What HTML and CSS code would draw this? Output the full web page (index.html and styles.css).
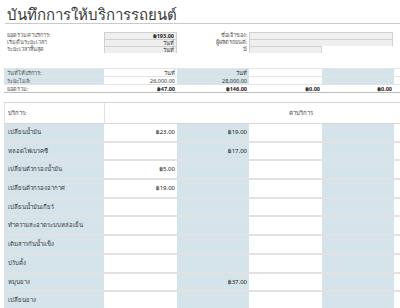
FILE: index.html
```html
<!DOCTYPE html>
<html lang="th">
<head>
<meta charset="utf-8">
<link rel="stylesheet" href="styles.css">
</head>
<body>
<div class="page">
  <h1 class="title">บันทึกการให้บริการรถยนต์</h1>

  <div class="grid summary">
    <div class="lbl">ยอดรวมค่าบริการ:</div>
    <div class="box num bold">฿193.00</div>
    <div class="rlbl">ชื่อเจ้าของ:</div>
    <div class="box wide"></div>
    <div></div>

    <div class="lbl">เริ่มต้นระยะเวลา</div>
    <div class="box num">วันที่</div>
    <div class="rlbl">ผู้ผลิตรถยนต์:</div>
    <div class="box wide"></div>
    <div></div>

    <div class="lbl">ระยะเวลาสิ้นสุด</div>
    <div class="box num">วันที่</div>
    <div class="rlbl">ปี:</div>
    <div class="box"></div>
    <div></div>
    <div></div>
  </div>

  <div class="grid visits">
    <div class="c blue lbl">วันที่ให้บริการ:</div>
    <div class="c num">วันที่</div>
    <div class="c blue num">วันที่</div>
    <div class="c"></div>
    <div class="c blue"></div>
    <div class="c"></div>

    <div class="c blue lbl">ระยะไมล์:</div>
    <div class="c num">26,000.00</div>
    <div class="c blue num">28,000.00</div>
    <div class="c"></div>
    <div class="c blue"></div>
    <div class="c"></div>

    <div class="c tot lbl">ยอดรวม:</div>
    <div class="c tot num bold">฿47.00</div>
    <div class="c tot num bold">฿146.00</div>
    <div class="c tot num bold">฿0.00</div>
    <div class="c tot num bold">฿0.00</div>
    <div class="c tot"></div>
  </div>

  <div class="grid services">
    <div class="h lbl">บริการ:</div>
    <div class="h head">ค่าบริการ</div>

    <div class="s blue lbl">เปลี่ยนน้ำมัน</div>
    <div class="s num">฿23.00</div>
    <div class="s blue num">฿19.00</div>
    <div class="s"></div><div class="s blue"></div><div class="s"></div>

    <div class="s blue lbl">หลอดไฟเบรคซี</div>
    <div class="s num"></div>
    <div class="s blue num">฿17.00</div>
    <div class="s"></div><div class="s blue"></div><div class="s"></div>

    <div class="s blue lbl">เปลี่ยนตัวกรองน้ำมัน</div>
    <div class="s num">฿5.00</div>
    <div class="s blue"></div>
    <div class="s"></div><div class="s blue"></div><div class="s"></div>

    <div class="s blue lbl">เปลี่ยนตัวกรองอากาศ</div>
    <div class="s num">฿19.00</div>
    <div class="s blue"></div>
    <div class="s"></div><div class="s blue"></div><div class="s"></div>

    <div class="s blue lbl">เปลี่ยนน้ำมันเกียร์</div>
    <div class="s"></div>
    <div class="s blue"></div>
    <div class="s"></div><div class="s blue"></div><div class="s"></div>

    <div class="s blue lbl">ทำความสะอาดระบบหล่อเย็น</div>
    <div class="s"></div>
    <div class="s blue"></div>
    <div class="s"></div><div class="s blue"></div><div class="s"></div>

    <div class="s blue lbl">เติมสารกันน้ำแข็ง</div>
    <div class="s"></div>
    <div class="s blue"></div>
    <div class="s"></div><div class="s blue"></div><div class="s"></div>

    <div class="s blue lbl">ปรับตั้ง</div>
    <div class="s"></div>
    <div class="s blue"></div>
    <div class="s"></div><div class="s blue"></div><div class="s"></div>

    <div class="s blue lbl">หมุนยาง</div>
    <div class="s"></div>
    <div class="s blue num">฿37.00</div>
    <div class="s"></div><div class="s blue"></div><div class="s"></div>

    <div class="s blue lbl">เปลี่ยนยาง</div>
    <div class="s"></div>
    <div class="s blue"></div>
    <div class="s"></div><div class="s blue"></div><div class="s"></div>
  </div>
</div>
</body>
</html>
```

FILE: styles.css
```css
html, body {
  margin: 0;
  padding: 0;
  background: #fff;
}
body {
  font-family: "Noto Sans", "DejaVu Sans", "Liberation Sans", sans-serif;
  color: #333;
  width: 400px;
  height: 308px;
  overflow: hidden;
}
.page {
  padding-left: 4px;
}
.title {
  margin: 0 0 0 1px;
  padding: 5px 0 0 2px;
  height: 18px;
  font-size: 15px;
  font-weight: normal;
  line-height: 18px;
  color: #3a3a3a;
  border-bottom: 1px solid #c9c9c9;
}
.grid {
  display: grid;
  grid-template-columns: 100px 73px 72px 73px 72px 1fr;
}
.summary {
  margin-top: 8px;
  grid-auto-rows: 7px;
  font-size: 5.5px;
  line-height: 7px;
}
.summary .lbl {
  padding-left: 3px;
  color: #555;
}
.box {
  background: #efefef;
  border: 1px solid #d0d0d0;
  border-bottom: 0;
  box-sizing: border-box;
  line-height: 6px;
}
.box.wide {
  grid-column: span 2;
  margin-right: 1px;
}
.rlbl {
  text-align: right;
  padding-right: 2px;
  color: #555;
}
.num {
  text-align: right;
  padding-right: 2px;
}
.bold {
  font-weight: bold;
  color: #222;
}
.visits {
  margin-top: 15px;
  grid-auto-rows: 8px;
  font-size: 5.5px;
  line-height: 8px;
  border-top: 1px solid #e4e4e4;
}
.visits .c {
  border-bottom: 1px solid #e4e4e4;
  box-sizing: border-box;
}
.visits .lbl {
  padding-left: 3px;
  color: #555;
}
.blue {
  background: #d5e3ea;
}
.visits .tot {
  background: #fff;
  border-bottom: 1px solid #bdbdbd;
}
.services {
  margin-top: 9px;
  border-top: 1px solid #d6d6d6;
  grid-template-rows: 21px;
  grid-auto-rows: 18.7px;
  font-size: 6px;
}
.services .h {
  line-height: 20px;
  border-bottom: 1px solid #d6d6d6;
  border-left: 1px solid #e2e2e2;
}
.services .h.lbl {
  padding-left: 3px;
}
.services .head {
  grid-column: 2 / 7;
  text-align: center;
  padding-left: 96px;
  color: #444;
}
.services .s {
  border-bottom: 2px solid #e2e2e2;
  box-sizing: border-box;
  line-height: 17px;
}
.services .lbl {
  padding-left: 4px;
  color: #3a3a3a;
}
.services .num {
  padding-right: 2px;
  color: #222;
}
```
